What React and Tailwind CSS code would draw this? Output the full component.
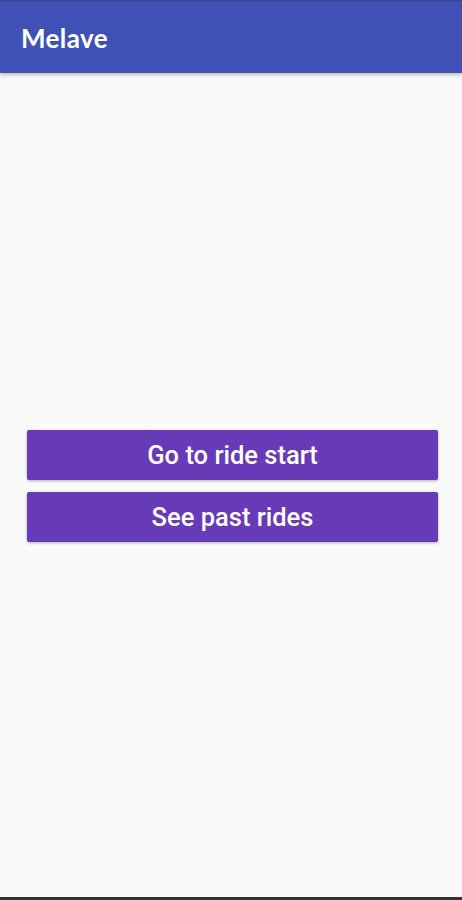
export default function App() {
  return (
    <div className="h-[900px] w-full flex flex-col bg-[#fafafa]" style={{ fontFamily: "Roboto, 'Liberation Sans', sans-serif" }}>
      <header className="h-[73px] shrink-0 bg-[#3f51b5] border-t-2 border-[#3949a0] flex items-center px-[21px] shadow-[0_2px_4px_rgba(0,0,0,0.25)] z-10">
        <h1 className="text-white text-[26px] font-bold tracking-[0.4px] mt-[1px]" style={{ fontFamily: "Lato, 'Open Sans', sans-serif" }}>
          Melave
        </h1>
      </header>

      <main className="flex-1 flex flex-col justify-center pl-[27px] pr-[24px] pt-[2px] gap-[12px]">
        <button className="h-[50px] w-full bg-[#673ab7] text-white text-[25.5px] font-medium rounded-[2px] shadow-[0_1px_3px_rgba(0,0,0,0.3)]">
          Go to ride start
        </button>
        <button className="h-[50px] w-full bg-[#673ab7] text-white text-[25.5px] font-medium rounded-[2px] shadow-[0_1px_3px_rgba(0,0,0,0.3)]">
          See past rides
        </button>
      </main>

      <div className="h-[3px] shrink-0 bg-[#333]" />
    </div>
  );
}
